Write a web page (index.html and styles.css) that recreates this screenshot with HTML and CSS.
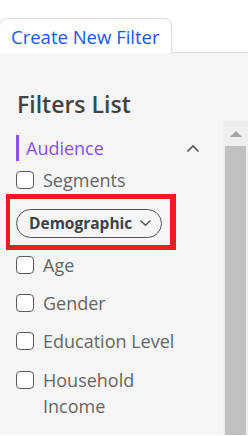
FILE: index.html
```html
<!DOCTYPE html>
<html lang="en">
<head>
    <meta charset="UTF-8">
    <meta name="viewport" content="width=device-width, initial-scale=1.0">
    <title>Filters</title>
    <link rel="stylesheet" href="styles.css">
</head>
<body>

<div class="tabs">
  <div class="tab">Create New Filter</div>
</div>

<div class="panel">
  <h2 class="panel-title">Filters List</h2>

  <div class="scroller">
    <div class="list">
      <div class="group-head">
        <span class="group-name">Audience</span>
        <svg class="chevron-up" width="14" height="9" viewBox="0 0 14 9">
          <path d="M1.5 7.5 L7 2 L12.5 7.5" fill="none" stroke="#555" stroke-width="1.6"/>
        </svg>
      </div>

      <label class="item"><span class="box"></span><span class="item-text">Segments</span></label>

      <div class="highlight">
        <span class="pill">Demographic
          <svg class="chevron-down" width="13" height="8" viewBox="0 0 13 8">
            <path d="M1.5 1.5 L6.5 6.3 L11.5 1.5" fill="none" stroke="#555" stroke-width="1.3"/>
          </svg>
        </span>
      </div>

      <label class="item"><span class="box"></span><span class="item-text">Age</span></label>
      <label class="item"><span class="box"></span><span class="item-text">Gender</span></label>
      <label class="item"><span class="box"></span><span class="item-text">Education Level</span></label>
      <label class="item"><span class="box"></span><span class="item-text">Household Income</span></label>
    </div>

    <div class="scrollbar">
      <div class="arrow-up"></div>
      <div class="thumb"></div>
    </div>
  </div>
</div>

</body>
</html>
```

FILE: styles.css
```css
body {
  margin: 0;
  background: #fff;
  font-family: "Open Sans", "Noto Sans", sans-serif;
  height: 436px;
  overflow: hidden;
}

.tabs {
  padding-top: 18px;
  border-bottom: 1px solid #dcdcdc;
  display: flex;
}

.tab {
  margin-left: -1px;
  margin-bottom: -1px;
  width: 173px;
  height: 35px;
  box-sizing: border-box;
  border: 1px solid #dcdcdc;
  border-bottom: none;
  border-radius: 8px 8px 0 0;
  background: #fff;
  color: #1357f5;
  font-size: 18.5px;
  line-height: 36px;
  padding-left: 11px;
}

.panel {
  background: #f5f5f5;
  height: 382px;
  display: flex;
  flex-direction: column;
}

.panel-title {
  margin: 0;
  padding: 34px 0 0 17px;
  height: 34px;
  font-size: 23px;
  font-weight: 600;
  color: #444;
  line-height: 34px;
}

.scroller {
  flex: 1;
  display: flex;
  overflow: hidden;
}

.list {
  flex: 1;
  display: flex;
  flex-direction: column;
  gap: 12.33px;
  padding: 14px 0 0 16px;
}

.group-head {
  display: flex;
  align-items: center;
  height: 26px;
  margin-bottom: -6.33px;
  padding-right: 23px;
}

.group-name {
  flex: 1;
  color: #8a4dff;
  font-size: 18px;
  line-height: 26px;
  border-left: 3px solid #8a4dff;
  padding-left: 7px;
}

.item {
  display: flex;
  align-items: flex-start;
  color: #666;
  font-size: 18px;
  line-height: 26px;
}

.box {
  flex: none;
  width: 18px;
  height: 18px;
  box-sizing: border-box;
  border: 1.5px solid #5a5a5a;
  border-radius: 4px;
  background: #fff;
  margin-top: 4px;
  margin-right: 9px;
}

.item-text {
  max-width: 140px;
}

.highlight {
  align-self: flex-start;
  border: solid #ed1c24;
  border-width: 5px 6px 5px 4px;
  padding: 10px 8px 7px 6px;
  margin: -11.67px 0 -10.33px -10px;
}

.pill {
  display: flex;
  align-items: center;
  gap: 7px;
  width: 146px;
  height: 29px;
  box-sizing: border-box;
  border: 1px solid #555;
  border-radius: 15px;
  padding-left: 12px;
  color: #3e4147;
  font-size: 15.5px;
  font-weight: 700;
}

.scrollbar {
  flex: none;
  width: 25px;
  background: #efefef;
  display: flex;
  flex-direction: column;
  align-items: center;
}

.arrow-up {
  margin-top: 10px;
  width: 0;
  height: 0;
  border-left: 6px solid transparent;
  border-right: 6px solid transparent;
  border-bottom: 6px solid #a3a3a3;
}

.thumb {
  margin-top: 9px;
  width: 21px;
  flex: 1;
  background: #c1c1c1;
}
```
